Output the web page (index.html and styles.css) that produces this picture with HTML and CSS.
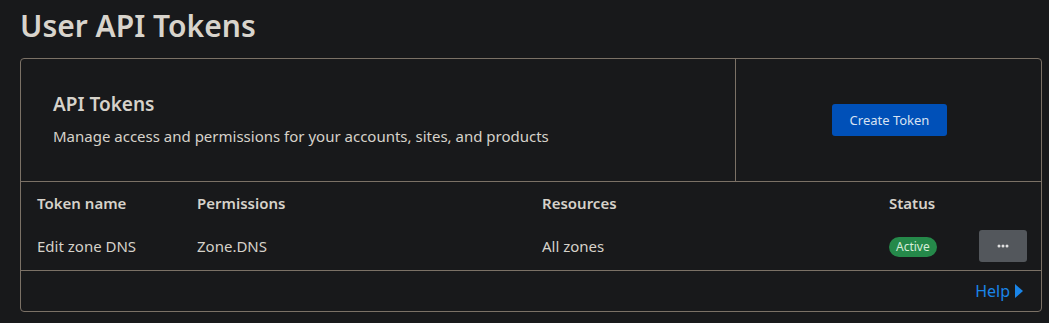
FILE: index.html
```html
<!DOCTYPE html>
<html>
<head>
<meta charset="utf-8">
<link rel="stylesheet" href="styles.css">
</head>
<body>
<main class="page">
  <h1 class="page-title">User API Tokens</h1>
  <section class="card">
    <div class="card-top">
      <div class="card-intro">
        <h2 class="card-title">API Tokens</h2>
        <p class="card-desc">Manage access and permissions for your accounts, sites, and products</p>
      </div>
      <div class="card-action">
        <button class="btn-primary">Create Token</button>
      </div>
    </div>
    <div class="table">
      <div class="row head">
        <div>Token name</div>
        <div>Permissions</div>
        <div>Resources</div>
        <div>Status</div>
        <div></div>
      </div>
      <div class="row body">
        <div>Edit zone DNS</div>
        <div>Zone.DNS</div>
        <div>All zones</div>
        <div><span class="badge">Active</span></div>
        <div><button class="btn-more"><svg width="12" height="4" viewBox="0 0 12 4"><circle cx="2" cy="2" r="1.5" fill="#e0e0e0"/><circle cx="6" cy="2" r="1.5" fill="#e0e0e0"/><circle cx="10" cy="2" r="1.5" fill="#e0e0e0"/></svg></button></div>
      </div>
    </div>
    <div class="card-foot">
      <a class="help" href="#">Help <svg width="8" height="14" viewBox="0 0 8 14"><path d="M0 0 L8 7 L0 14 Z" fill="#1a85e8"/></svg></a>
    </div>
  </section>
</main>
</body>
</html>
```
FILE: styles.css
```css
html, body {
  margin: 0;
  background: #18191b;
}
body {
  font-family: "Noto Sans", "Open Sans", sans-serif;
  color: #d6d2ca;
}
.page {
  padding: 5px 6px 0 20px;
}
.page-title {
  margin: 0 0 11px;
  font-size: 30px;
  line-height: 42px;
  font-weight: 600;
  color: #d8d4cc;
}
.card {
  border: 1px solid #7b7166;
  border-radius: 4px;
  width: 1022px;
  box-sizing: border-box;
}
.card-top {
  display: flex;
  border-bottom: 1px solid #7b7166;
  height: 122px;
}
.card-intro {
  width: 715px;
  border-right: 1px solid #7b7166;
  padding: 32px 0 0 32px;
  box-sizing: border-box;
}
.card-title {
  margin: 0;
  font-size: 19px;
  line-height: 26px;
  font-weight: 600;
}
.card-desc {
  margin: 9px 0 0;
  font-size: 15px;
  line-height: 20px;
}
.card-action {
  flex: 1;
  display: flex;
  align-items: center;
  justify-content: center;
}
.btn-primary {
  background: #0050b8;
  color: #d8e2f2;
  border: none;
  border-radius: 3px;
  font-family: inherit;
  font-size: 13px;
  height: 32px;
  width: 115px;
  padding: 0;
  margin-left: 2px;
}
.row {
  display: grid;
  grid-template-columns: 160px 345px 346px 1fr 48px;
  align-items: center;
  padding: 0 15px 0 16px;
  font-size: 15px;
}
.row.head {
  height: 40px;
  font-weight: 600;
  box-sizing: border-box;
  padding-top: 1px;
}
.row.body {
  height: 48px;
  border-bottom: 1px solid #7b7166;
}
.badge {
  display: inline-block;
  background: #25894a;
  color: #d6ecd9;
  font-size: 12px;
  line-height: 20px;
  padding: 0 7px;
  border-radius: 10px;
}
.row > div:nth-child(4) {
  padding-left: 1px;
}
.btn-more {
  width: 48px;
  height: 32px;
  background: #53575c;
  border: none;
  border-radius: 3px;
  display: flex;
  align-items: center;
  justify-content: center;
  padding: 0;
  margin-left: 1px;
}
.card-foot {
  display: flex;
  justify-content: flex-end;
  padding: 0 18px 0 0;
  height: 40px;
  align-items: center;
}
.help {
  color: #1a85e8;
  text-decoration: none;
  font-size: 16px;
  display: flex;
  align-items: center;
  gap: 5px;
}
```
